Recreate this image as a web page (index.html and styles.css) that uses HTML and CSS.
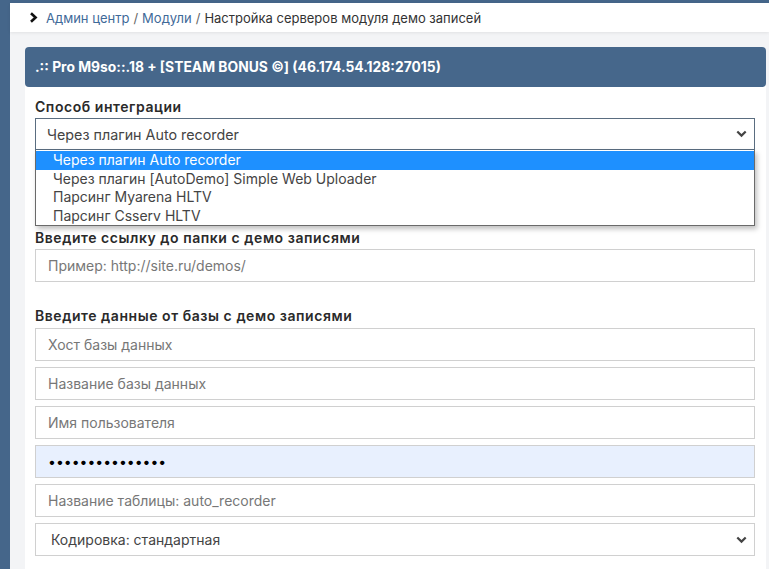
FILE: index.html
```html
<!DOCTYPE html>
<html lang="ru">
<head>
<meta charset="utf-8">
<link rel="stylesheet" href="styles.css">
</head>
<body>
<div class="main">
  <div class="crumbs">
    <svg class="crumb-icon" width="9" height="11" viewBox="0 0 9 11"><path d="M2 1.2 L6.6 5.5 L2 9.8" fill="none" stroke="#111" stroke-width="2.6" stroke-linejoin="miter"/></svg>
    <a class="crumb-link" href="#">Админ центр</a><span class="sep">/</span><a class="crumb-link" href="#">Модули</a><span class="sep">/</span><span class="crumb-current">Настройка серверов модуля демо записей</span>
  </div>
  <div class="content">
    <div class="card">
      <div class="card-header">.:: Pro M9so::.18 + [STEAM BONUS ©] (46.174.54.128:27015)</div>
      <div class="card-body">
        <div class="group group-type">
          <label class="label">Способ интеграции</label>
          <div class="select-wrap">
            <select class="control select select-open">
              <option>Через плагин Auto recorder</option>
            </select>
            <svg class="chev" width="11" height="8" viewBox="0 0 11 8"><path d="M1.3 1.5 L5.5 5.6 L9.7 1.5" fill="none" stroke="#444" stroke-width="2.2"/></svg>
            <ul class="dropdown">
              <li class="opt opt-active">Через плагин Auto recorder</li>
              <li class="opt">Через плагин [AutoDemo] Simple Web Uploader</li>
              <li class="opt">Парсинг Myarena HLTV</li>
              <li class="opt">Парсинг Csserv HLTV</li>
            </ul>
          </div>
        </div>
        <div class="group group-url">
          <label class="label">Введите ссылку до папки с демо записями</label>
          <input class="control" type="text" placeholder="Пример: http://site.ru/demos/">
        </div>
        <div class="group group-db">
          <label class="label">Введите данные от базы с демо записями</label>
          <input class="control" type="text" placeholder="Хост базы данных">
          <input class="control" type="text" placeholder="Название базы данных">
          <input class="control" type="text" placeholder="Имя пользователя">
          <input class="control control-filled" type="password" value="123456789012345">
          <input class="control" type="text" placeholder="Название таблицы: auto_recorder">
          <div class="select-wrap">
            <select class="control select">
              <option>Кодировка: стандартная</option>
            </select>
            <svg class="chev" width="11" height="8" viewBox="0 0 11 8"><path d="M1.3 1.5 L5.5 5.6 L9.7 1.5" fill="none" stroke="#444" stroke-width="2.2"/></svg>
          </div>
        </div>
      </div>
    </div>
  </div>
</div>
</body>
</html>
```
FILE: styles.css
```css
* { box-sizing: border-box; }
html, body { margin: 0; padding: 0; }
body {
  background: #45668a;
  font-family: Inter, "Noto Sans", sans-serif;
  width: 769px;
  height: 569px;
  overflow: hidden;
}
.main {
  margin: 3px 0 0 10px;
  background: #f3f4f6;
  height: 566px;
}
.crumbs {
  height: 29px;
  background: #fff;
  display: flex;
  align-items: center;
  padding-left: 19px;
  font-size: 13px;
  color: #333;
  box-shadow: 0 1px 3px rgba(0,0,0,0.08);
  position: relative;
}
.crumb-icon { margin-right: 8px; }
.crumb-link { color: #3f6a99; text-decoration: none; }
.sep { color: #666; margin: 0 4px; }
.crumb-current { color: #333; }
.content {
  padding: 15px 3px 0 15px;
}
.card {
  background: #fff;
  border-radius: 4px 4px 0 0;
}
.card-header {
  height: 40px;
  background: #46678b;
  color: #fff;
  font-weight: 700;
  font-size: 13.85px;
  display: flex;
  align-items: center;
  padding-left: 10px;
  border-radius: 4px;
}
.card-body {
  padding: 10px 11px 20px 10px;
}
.group { display: flex; flex-direction: column; }
.label {
  font-size: 14px;
  font-weight: 600;
  letter-spacing: 0.55px;
  color: #2a2a2a;
  line-height: 20px;
  margin-bottom: 1px;
}
.group-type { margin-bottom: 78px; }
.group-url { margin-bottom: 24px; }
.group-db .label { margin-bottom: 2px; }
.control {
  display: block;
  width: 100%;
  height: 33px;
  border: 1px solid #d0d0d0;
  background: #fff;
  font-family: Inter, "Noto Sans", sans-serif;
  font-size: 14px;
  color: #555;
  padding: 0 12px;
  margin: 0 0 6px 0;
  outline: none;
  border-radius: 0;
}
.group-url .control { margin-bottom: 0; }
.control::placeholder { color: #777; }
.control-filled {
  background: #e8f0fe;
  color: #000;
  font-size: 14px;
}
.select {
  appearance: none;
  -webkit-appearance: none;
  padding-left: 11px;
  color: #444;
  font-size: 14.3px;
}
.group-db .select { padding-left: 15px; font-size: 14px; }
.select-open {
  height: 32px;
  border-color: #5a6d80;
  margin: 0;
}
.select-wrap { position: relative; }
.chev {
  position: absolute;
  right: 8px;
  top: 12px;
  pointer-events: none;
}
.group-db .chev { top: 13px; }
.dropdown {
  position: absolute;
  left: 0;
  right: 0;
  top: 32px;
  margin: 0;
  padding: 1px 0 0 0;
  list-style: none;
  background: #fff;
  border: 1px solid #6a6a6a;
  border-top: none;
  box-shadow: 2px 3px 5px rgba(0,0,0,0.25);
  z-index: 5;
}
.opt {
  font-size: 14px;
  line-height: 18.5px;
  padding-left: 17px;
  color: #444;
}
.opt-active {
  background: #1e90ff;
  color: #fff;
}
```
